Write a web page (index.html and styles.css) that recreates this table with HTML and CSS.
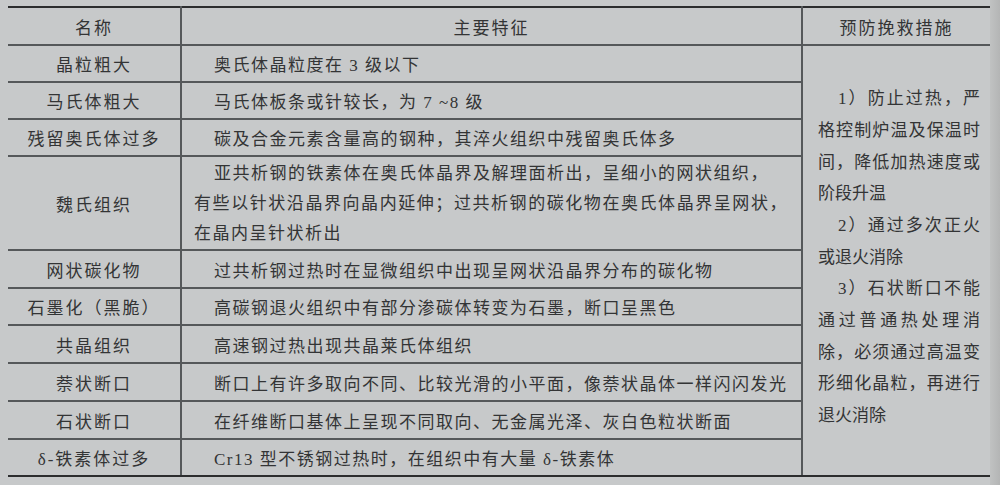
FILE: index.html
```html
<!DOCTYPE html>
<html lang="zh-CN">
<head>
<meta charset="utf-8">
<title>过热缺陷</title>
<link rel="stylesheet" href="styles.css">
</head>
<body>
<div class="page">
  <table class="spec">
    <colgroup>
      <col class="c-name">
      <col class="c-feat">
      <col class="c-fix">
    </colgroup>
    <thead>
      <tr class="r-head">
        <th>名称</th>
        <th>主要特征</th>
        <th>预防挽救措施</th>
      </tr>
    </thead>
    <tbody>
      <tr class="r">
        <td class="name">晶粒粗大</td>
        <td class="feat"><span class="ind">奥氏体晶粒度在 3 级以下</span></td>
        <td class="fix" rowspan="10">
          <div class="fix-text">
            <p class="jl ind">1）防止过热，严</p>
            <p class="jl">格控制炉温及保温时</p>
            <p class="jl">间，降低加热速度或</p>
            <p>阶段升温</p>
            <p class="jl ind">2）通过多次正火</p>
            <p>或退火消除</p>
            <p class="jl ind">3）石状断口不能</p>
            <p class="jl">通过普通热处理消</p>
            <p class="jl">除，必须通过高温变</p>
            <p class="jl">形细化晶粒，再进行</p>
            <p>退火消除</p>
          </div>
        </td>
      </tr>
      <tr class="r">
        <td class="name">马氏体粗大</td>
        <td class="feat"><span class="ind">马氏体板条或针较长，为 7 ~8 级</span></td>
      </tr>
      <tr class="r">
        <td class="name">残留奥氏体过多</td>
        <td class="feat"><span class="ind">碳及合金元素含量高的钢种，其淬火组织中残留奥氏体多</span></td>
      </tr>
      <tr class="r-tall">
        <td class="name">魏氏组织</td>
        <td class="feat multi">
          <p class="jl ind">亚共析钢的铁素体在奥氏体晶界及解理面析出，呈细小的网状组织，</p>
          <p class="jl">有些以针状沿晶界向晶内延伸；过共析钢的碳化物在奥氏体晶界呈网状，</p>
          <p>在晶内呈针状析出</p>
        </td>
      </tr>
      <tr class="r-38">
        <td class="name">网状碳化物</td>
        <td class="feat"><span class="ind">过共析钢过热时在显微组织中出现呈网状沿晶界分布的碳化物</span></td>
      </tr>
      <tr class="r">
        <td class="name">石墨化（黑脆）</td>
        <td class="feat"><span class="ind">高碳钢退火组织中有部分渗碳体转变为石墨，断口呈黑色</span></td>
      </tr>
      <tr class="r-38">
        <td class="name">共晶组织</td>
        <td class="feat"><span class="ind">高速钢过热出现共晶莱氏体组织</span></td>
      </tr>
      <tr class="r-38">
        <td class="name">萘状断口</td>
        <td class="feat"><span class="ind">断口上有许多取向不同、比较光滑的小平面，像萘状晶体一样闪闪发光</span></td>
      </tr>
      <tr class="r-38">
        <td class="name">石状断口</td>
        <td class="feat"><span class="ind">在纤维断口基体上呈现不同取向、无金属光泽、灰白色粒状断面</span></td>
      </tr>
      <tr class="r">
        <td class="name">δ-铁素体过多</td>
        <td class="feat"><span class="ind">Cr13 型不锈钢过热时，在组织中有大量 δ-铁素体</span></td>
      </tr>
    </tbody>
  </table>
  <div class="edge"></div>
</div>
</body>
</html>
```

FILE: styles.css
```css
html, body {
  margin: 0;
  padding: 0;
}

body {
  background: #c7c9ca;
  color: #333435;
  font-family: "Liberation Serif", "Noto Sans CJK SC", serif;
  font-size: 17px;
  width: 1000px;
  height: 485px;
  overflow: hidden;
}

.page {
  display: flex;
  align-items: flex-start;
  padding: 6px 0 0 8px;
  height: 485px;
  box-sizing: border-box;
}

.edge {
  flex: 1;
  align-self: stretch;
  margin-top: -6px;
  background: linear-gradient(90deg, #c0c2c2, #b4b5b5);
}

.spec {
  border-collapse: collapse;
  table-layout: fixed;
  width: 982px;
  letter-spacing: 1.5px;
}

.c-name { width: 173px; }
.c-feat { width: 621px; }
.c-fix  { width: 188px; }

.spec th,
.spec td {
  padding: 0;
  border: 2px solid #55585a;
  font-weight: normal;
  vertical-align: middle;
}

.spec th:last-child,
.spec td.fix {
  border-right: none;
}

.spec td:first-child,
.spec th:first-child {
  border-left: none;
}

.spec thead th {
  border-top: 2px solid #2c2d2e;
  text-align: center;
  letter-spacing: 2px;
}

.spec tbody tr:last-child td {
  border-bottom: 2px solid #2c2d2e;
}

.spec td.fix {
  border-bottom: 2px solid #2c2d2e;
}

.r-head { height: 38px; }
.r { height: 37px; }
.r-38 { height: 38px; }
.r-tall { height: 94px; }

.name {
  text-align: center;
  letter-spacing: 2px;
}

.feat {
  padding: 0 13px 0 12px !important;
  text-align: left;
  white-space: nowrap;
}

.feat .ind {
  display: inline-block;
  padding-left: 20px;
}

.feat.multi {
  padding-top: 2px !important;
}

.feat.multi p {
  margin: 0;
  line-height: 30px;
}

.feat.multi p.ind {
  padding-left: 20px;
}

.jl {
  text-align: justify;
  text-align-last: justify;
}

.fix {
  vertical-align: middle;
  padding: 0 10px 6px 15px !important;
  letter-spacing: 0;
}

.fix-text p {
  margin: 0;
  line-height: 31.7px;
}

.fix-text p.ind {
  padding-left: 20px;
}
```
